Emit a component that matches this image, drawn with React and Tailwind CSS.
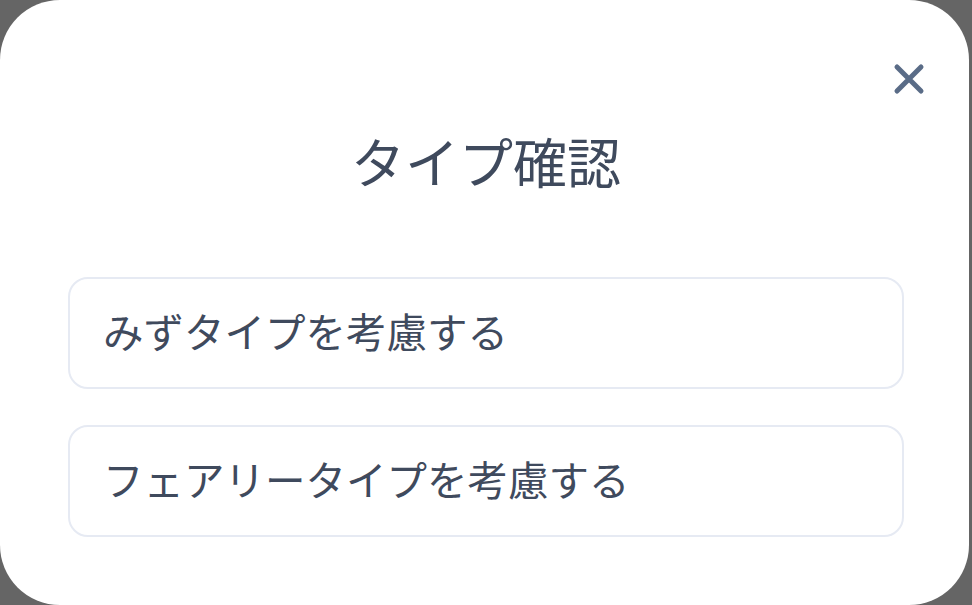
import { useState } from 'react';

const options = ['みずタイプを考慮する', 'フェアリータイプを考慮する'];

export default function App() {
  const [selected, setSelected] = useState(null);

  return (
    <div
      className="w-[972px] h-[605px] bg-[#656565] overflow-hidden"
      style={{ fontFamily: '"Noto Sans CJK JP", "Noto Sans", sans-serif' }}
    >
      {/* Dialog */}
      <div className="relative w-[969px] h-[605px] bg-white rounded-[60px] flex flex-col pl-[68px] pr-[65px]">
        <button
          aria-label="閉じる"
          className="absolute left-[893px] top-[63px] w-[32px] h-[32px] flex items-center justify-center"
        >
          <svg width="32" height="32" viewBox="0 0 32 32" fill="none">
            <path
              d="M4 4 L28 28 M28 4 L4 28"
              stroke="#5a6c87"
              strokeWidth="5"
              strokeLinecap="round"
            />
          </svg>
        </button>

        <h1 className="mt-[128px] text-center text-[54px] leading-[66px] font-normal text-[#3f4a5d]">
          タイプ確認
        </h1>

        <div className="mt-[83px] flex flex-col gap-[36px]">
          {options.map((label, i) => (
            <button
              key={label}
              onClick={() => setSelected(i)}
              className={`h-[112px] w-full rounded-[20px] border-2 border-[#e6eaf3] bg-white pl-[33px] pb-[4px] text-left text-[40.5px] leading-none text-[#3f4a5d] ${
                selected === i ? 'bg-slate-50' : ''
              }`}
            >
              {label}
            </button>
          ))}
        </div>
      </div>
    </div>
  );
}
